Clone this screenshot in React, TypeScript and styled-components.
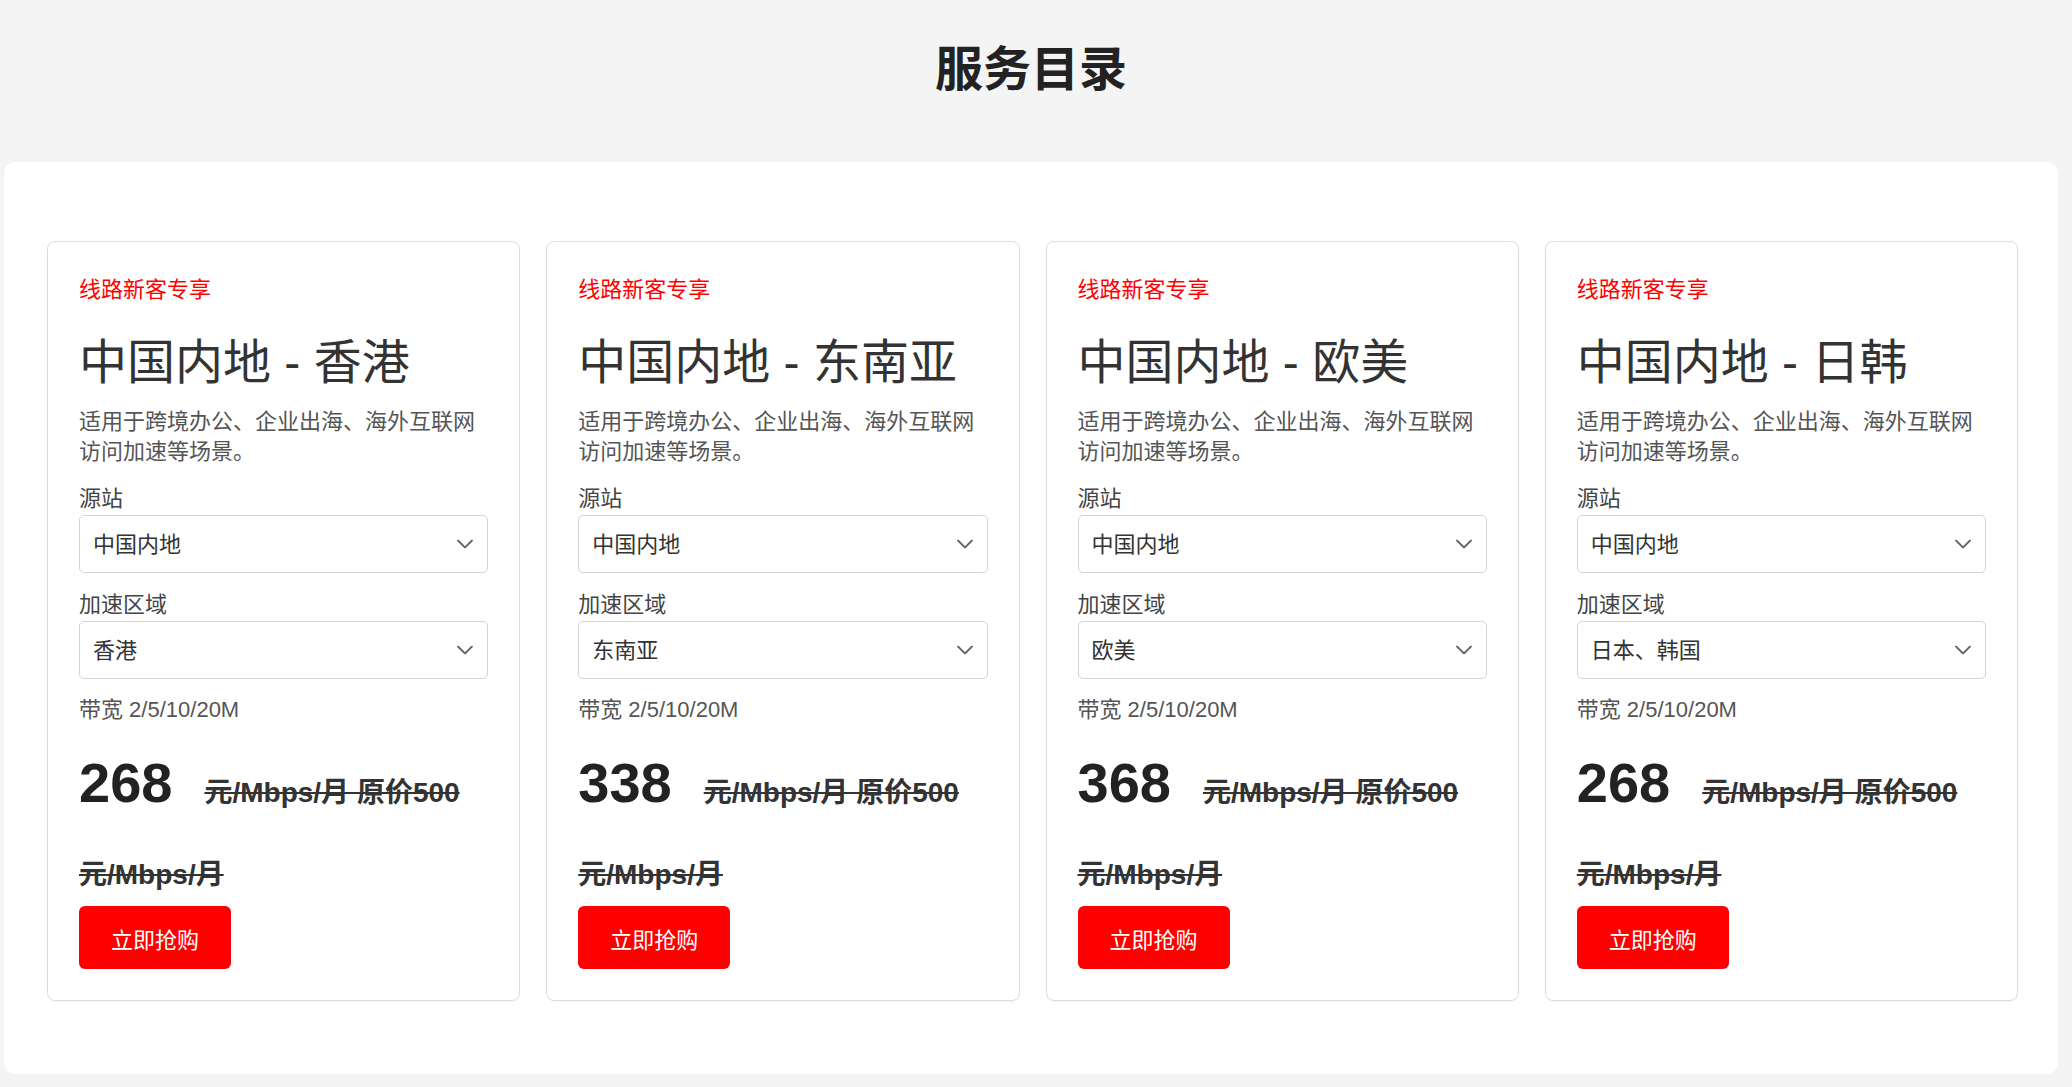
import React from 'react';
import { styled, createGlobalStyle } from 'styled-components';

interface Plan {
  region: string;
  area: string;
  price: number;
}

const plans: Plan[] = [
  { region: '香港', area: '香港', price: 268 },
  { region: '东南亚', area: '东南亚', price: 338 },
  { region: '欧美', area: '欧美', price: 368 },
  { region: '日韩', area: '日本、韩国', price: 268 },
];

const GlobalStyle = createGlobalStyle`
  body {
    margin: 0;
    background: #f4f4f4;
    font-family: 'Liberation Sans', 'Noto Sans CJK SC', sans-serif;
    color: #333;
  }
`;

const Chevron = () => (
  <ChevronIcon viewBox="0 0 16 9" width="16" height="9">
    <path d="M1 1l7 7 7-7" fill="none" stroke="#666" strokeWidth="1.8" strokeLinecap="round" strokeLinejoin="round" />
  </ChevronIcon>
);

const Select = ({ value }: { value: string }) => (
  <SelectWrap>
    <SelectBox value={value} onChange={() => {}}>
      <option value={value}>{value}</option>
    </SelectBox>
    <Chevron />
  </SelectWrap>
);

const Card = ({ region, area, price }: Plan) => (
  <CardBox>
    <Tag>线路新客专享</Tag>
    <Title>中国内地 - {region}</Title>
    <Desc>适用于跨境办公、企业出海、海外互联网访问加速等场景。</Desc>
    <FieldLabel>源站</FieldLabel>
    <Select value="中国内地" />
    <FieldLabel>加速区域</FieldLabel>
    <Select value={area} />
    <Bandwidth>带宽 2/5/10/20M</Bandwidth>
    <Price>
      {price}
      <Old>元/Mbps/月 原价500 元/Mbps/月</Old>
    </Price>
    <BuyButton>立即抢购</BuyButton>
  </CardBox>
);

const App = () => {
  return (
    <Page>
      <GlobalStyle />
      <Heading>服务目录</Heading>
      <Panel>
        <Grid>
          {plans.map((p) => (
            <Card key={p.region} {...p} />
          ))}
        </Grid>
      </Panel>
    </Page>
  );
};

const Page = styled.div`
  padding: 38px 14px 13px 4px;
`;

const Heading = styled.h1`
  margin: 0 0 60px;
  text-align: center;
  font-size: 48px;
  line-height: 64px;
  font-weight: 700;
  color: #222;
`;

const Panel = styled.section`
  background: #fff;
  border-radius: 12px;
  padding: 79px 40px 73px 43px;
`;

const Grid = styled.div`
  display: grid;
  grid-template-columns: repeat(4, 1fr);
  gap: 26px;
`;

const CardBox = styled.article`
  border: 1px solid #ddd;
  border-radius: 8px;
  padding: 32px 31px 31px;
  box-shadow: 0 1px 2px rgba(0, 0, 0, 0.04);
`;

const Tag = styled.div`
  color: #ff0000;
  font-size: 22px;
  line-height: 32px;
`;

const Title = styled.h2`
  margin: 28px 0 0;
  font-size: 48px;
  line-height: 58px;
  font-weight: 400;
  color: #333;
  white-space: nowrap;
`;

const Desc = styled.p`
  margin: 15px 0 0;
  font-size: 22px;
  line-height: 30px;
  color: #555;
`;

const FieldLabel = styled.div`
  margin-top: 17px;
  font-size: 22px;
  line-height: 30px;
  color: #444;
`;

const SelectWrap = styled.div`
  position: relative;
  margin-top: 1px;
`;

const SelectBox = styled.select`
  display: block;
  width: 100%;
  height: 58px;
  box-sizing: border-box;
  appearance: none;
  border: 1px solid #d4d4d4;
  border-radius: 5px;
  background: #fff;
  padding: 0 44px 0 13px;
  font-family: inherit;
  font-size: 22px;
  color: #333;
  outline: none;
`;

const ChevronIcon = styled.svg`
  position: absolute;
  right: 15px;
  top: 50%;
  transform: translateY(-50%);
  pointer-events: none;
`;

const Bandwidth = styled.div`
  margin-top: 16px;
  font-size: 22px;
  line-height: 30px;
  color: #555;
`;

const Price = styled.div`
  margin-top: 17px;
  font-size: 56px;
  line-height: 82px;
  font-weight: 700;
  color: #222;
`;

const Old = styled.del`
  margin-left: 32px;
  font-size: 28px;
  line-height: 40px;
  color: #333;
`;

const BuyButton = styled.button`
  display: block;
  margin-top: 0;
  width: 152px;
  height: 63px;
  border: none;
  border-radius: 6px;
  background: #ff0000;
  color: #fff;
  font-family: inherit;
  font-size: 22px;
  cursor: pointer;
`;

export default App;
